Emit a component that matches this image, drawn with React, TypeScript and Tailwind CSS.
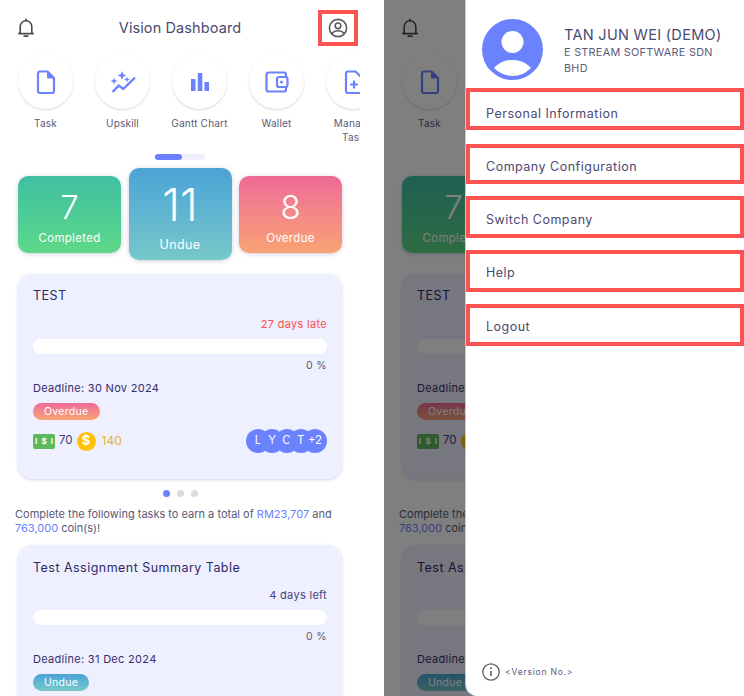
import type { ReactNode } from 'react';

const shortcuts = ['Task', 'Upskill', 'Gantt Chart', 'Wallet', 'Manage Task'];

// the highlight boxes in the picture are hand drawn, so spacing differs a little per row
const menuItems = [
  { label: 'Personal Information', box: 'h-[42px] pb-[3px]' },
  { label: 'Company Configuration', box: 'mt-[14px] h-[40px] pb-[4px]' },
  { label: 'Switch Company', box: 'mt-[12px] h-[42px] pb-[5px]' },
  { label: 'Help', box: 'mt-[12px] h-[42px] pb-[6px]' },
  { label: 'Logout', box: 'mt-[12px] h-[42px] pb-[6px]' },
];

const BellIcon = () => (
  <svg width="20" height="20" viewBox="0 0 20 20" fill="none" stroke="#4a4a4a" strokeWidth="1.6" strokeLinejoin="round">
    <path d="M4.2 14.6V8.6a5.8 5.8 0 0 1 11.6 0v6l1.4 1H2.8z" />
    <path d="M10 1.2v1.4" strokeLinecap="round" />
    <path d="M8.3 18.2h3.4" strokeWidth="1.8" strokeLinecap="round" />
  </svg>
);

const ProfileIcon = () => (
  <svg width="20" height="20" viewBox="0 0 20 20" fill="none" stroke="#5a5a5a" strokeWidth="1.6">
    <circle cx="10" cy="10" r="8.6" />
    <circle cx="10" cy="7.8" r="2.8" />
    <path d="M3.8 15.4c1.6-1.9 3.8-2.7 6.2-2.7s4.6.8 6.2 2.7" />
  </svg>
);

const ShortcutIcon = ({ name }: { name: string }) => {
  if (name === 'Task') {
    return (
      <svg width="20" height="24" viewBox="0 0 20 24" fill="none" stroke="#6b82ff" strokeWidth="2.2" strokeLinejoin="round">
        <path d="M2 3.5A2 2 0 0 1 4 1.5h7.5L18 8v13a2 2 0 0 1-2 2H4a2 2 0 0 1-2-2z" />
        <path d="M11.5 1.5V8H18z" fill="#6b82ff" strokeWidth="1" />
      </svg>
    );
  }
  if (name === 'Upskill') {
    return (
      <svg width="26" height="22" viewBox="0 0 26 22" fill="#6b82ff">
        <path d="M2.5 21l6.2-6.4 4.6 3.4L25 6.5" fill="none" stroke="#6b82ff" strokeWidth="2.4" />
        <path d="M12 0l1.2 3.3 3.3 1.2-3.3 1.2L12 9l-1.2-3.3-3.3-1.2 3.3-1.2z" />
        <path d="M4 6.5l.9 2.6 2.6.9-2.6.9-.9 2.6-.9-2.6L.5 10l2.6-.9z" />
        <path d="M17 5.5l.8 2.2 2.2.8-2.2.8-.8 2.2-.8-2.2-2.2-.8 2.2-.8z" />
      </svg>
    );
  }
  if (name === 'Gantt Chart') {
    return (
      <svg width="20" height="20" viewBox="0 0 20 20" fill="#6b82ff">
        <rect x="1" y="7" width="4.5" height="12" />
        <rect x="7.8" y="1" width="4.5" height="18" />
        <rect x="14.5" y="10" width="4.5" height="9" />
      </svg>
    );
  }
  if (name === 'Wallet') {
    return (
      <svg width="24" height="22" viewBox="0 0 24 22" fill="none" stroke="#6b82ff" strokeWidth="2.2" strokeLinejoin="round">
        <path d="M21 6V3.5a2 2 0 0 0-2-2H3.5a2 2 0 0 0-2 2v15a2 2 0 0 0 2 2H19a2 2 0 0 0 2-2V16" />
        <rect x="12" y="6" width="10.5" height="10" rx="2" />
        <circle cx="16.5" cy="11" r="1.5" fill="#6b82ff" stroke="none" />
      </svg>
    );
  }
  return (
    <svg width="20" height="24" viewBox="0 0 20 24" fill="none" stroke="#6b82ff" strokeWidth="2.2" strokeLinejoin="round">
      <path d="M2 3.5A2 2 0 0 1 4 1.5h7.5L18 8v13a2 2 0 0 1-2 2H4a2 2 0 0 1-2-2z" />
      <path d="M10 10.5v8M6 14.5h8" />
    </svg>
  );
};

const StatCard = ({ value, label, big, className }: { value: string; label: string; big?: boolean; className: string }) => (
  <div
    className={`flex w-[103px] flex-col items-center rounded-[10px] text-white shadow-[0_1px_4px_rgba(60,60,120,0.25)] ${className} ${
      big ? 'h-[92px] pt-[11px]' : 'h-[77px] pt-[11px]'
    }`}
  >
    <span className={big ? 'text-[45px] leading-[52px] font-light' : 'text-[33px] leading-[40px] font-light'}>{value}</span>
    <span className={big ? 'mt-[6px] text-[12.5px] leading-[16px] tracking-[0.4px]' : 'mt-[3px] text-[11.5px] leading-[16px] tracking-[0.3px]'}>{label}</span>
  </div>
);

const Avatars = () => (
  <div className="flex">
    {['L', 'Y', 'C', 'T', '+2'].map((a, i) => (
      <div
        key={a}
        className={`flex size-[24px] items-center justify-center rounded-full bg-[#6b82ff] text-[11.5px] text-white ${i > 0 ? 'ml-[-9.75px]' : ''}`}
      >
        {a}
      </div>
    ))}
  </div>
);

const TaskCard = ({ title, titleTop, note, noteClass, deadline, badge, badgeClass, footer }: {
  title: string;
  titleTop: string;
  note: string;
  noteClass: string;
  deadline: string;
  badge: string;
  badgeClass: string;
  footer?: ReactNode;
}) => (
  <div className="mx-[18px] h-[205px] rounded-[14px] bg-[#eeefff] px-[15px] shadow-[0_1px_3px_rgba(90,90,170,0.25)]">
    <div className={`h-[42px] text-[12.5px] leading-[16px] tracking-[0.47px] text-[#2e2a66] ${titleTop}`}>{title}</div>
    <div className={`text-right text-[11px] leading-[16px] tracking-[0.3px] ${noteClass}`}>{note}</div>
    <div className="mt-[7px] h-[15px] rounded-full bg-white" />
    <div className="mt-[5px] text-right text-[10.5px] leading-[14px] tracking-[0.4px] text-[#5a5a7a]">0 %</div>
    <div className="mt-[8px] text-[11px] leading-[14px] tracking-[0.3px] text-[#35306e]">{deadline}</div>
    <div className={`mt-[8px] flex h-[17px] w-fit items-center rounded-full px-[11px] text-[10.5px] tracking-[0.3px] text-white ${badgeClass}`}>{badge}</div>
    {footer}
  </div>
);

const Rewards = () => (
  <div className="mt-[9px] flex h-[24px] items-center">
    <div className="flex h-[15px] w-[22px] items-center justify-between rounded-[2px] bg-[#5cb85c] px-[2px] text-[8px] font-bold text-white">
      <span>I</span><span>$</span><span>I</span>
    </div>
    <span className="ml-[4px] text-[11.5px] text-[#3d3a78]">70</span>
    <div className="ml-[4px] flex size-[19px] items-center justify-center rounded-full bg-[#ffc107] text-[13px] font-bold text-white">$</div>
    <span className="ml-[6px] text-[12px] text-[#e8b423]">140</span>
    <div className="ml-auto">
      <Avatars />
    </div>
  </div>
);

const Dashboard = () => (
  <div className="h-[696px] w-[360px] overflow-hidden bg-white font-['Inter',sans-serif]">
    <header className="grid h-[54px] grid-cols-[1fr_auto_1fr] items-center pt-[2px] pr-[12px] pl-[16px]">
      <BellIcon />
      <h1 className="-ml-[4px] text-[14.5px] tracking-[0.1px] text-[#4a4a72]">Vision Dashboard</h1>
      <div className="justify-self-end">
        <ProfileIcon />
      </div>
    </header>

    <div className="flex gap-[22px] pl-[18px]">
      {shortcuts.map((s) => (
        <div key={s} className="flex w-[55px] shrink-0 flex-col items-center">
          <div className="flex size-[55px] items-center justify-center rounded-full bg-white shadow-[0_1px_2px_rgba(70,70,120,0.22)]">
            <ShortcutIcon name={s} />
          </div>
          <span className="mt-[7px] w-[60px] shrink-0 text-center text-[10px] leading-[14px] tracking-[0.2px] text-[#5a5a78]">{s}</span>
        </div>
      ))}
    </div>

    <div className="mx-auto mt-[10px] h-[6px] w-[50px] rounded-full bg-[#eeefff]">
      <div className="h-full w-[27px] rounded-full bg-[#6b7fff]" />
    </div>

    <div className="mt-[8px] flex h-[92px] items-center justify-between px-[18px]">
      <StatCard value="7" label="Completed" className="bg-gradient-to-b from-[#3fbfa3] to-[#5dd887]" />
      <StatCard value="11" label="Undue" big className="bg-gradient-to-b from-[#4ba3d6] to-[#77c8ca]" />
      <StatCard value="8" label="Overdue" className="bg-gradient-to-b from-[#ef6a97] to-[#f8a272]" />
    </div>

    <div className="mt-[14px]">
      <TaskCard
        title="TEST"
        titleTop="pt-[14px]"
        note="27 days late"
        noteClass="text-[#ff5050]"
        deadline="Deadline: 30 Nov 2024"
        badge="Overdue"
        badgeClass="bg-gradient-to-b from-[#ef6a97] to-[#f8a272]"
        footer={<Rewards />}
      />
    </div>

    <div className="mt-[11px] flex justify-center gap-[7px]">
      <span className="size-[7px] rounded-full bg-[#6b7fff]" />
      <span className="size-[7px] rounded-full bg-[#dcdcdc]" />
      <span className="size-[7px] rounded-full bg-[#dcdcdc]" />
    </div>

    <p className="mt-[10px] px-[15px] text-[11px] leading-[14px] text-[#5a5a78]">
      Complete the following tasks to earn a total of <span className="text-[#6b82ff]">RM23,707</span> and{' '}
      <span className="text-[#6b82ff]">763,000</span> coin(s)!
    </p>

    <div className="mt-[10px]">
      <TaskCard
        title="Test Assignment Summary Table"
        titleTop="pt-[15px]"
        note="4 days left"
        noteClass="text-[#45417c]"
        deadline="Deadline: 31 Dec 2024"
        badge="Undue"
        badgeClass="bg-gradient-to-b from-[#4ba3d6] to-[#77c8ca]"
      />
    </div>
  </div>
);

const Drawer = () => (
  <div className="absolute top-0 right-0 bottom-0 flex w-[278px] flex-col rounded-bl-[12px] bg-white font-['Inter',sans-serif] shadow-[-1px_0_0_#c9c9c9]">
    <div className="flex h-[88px] pt-[19px] pl-[16px]">
      <div className="size-[61px] shrink-0">
        <svg width="61" height="61" viewBox="0 0 61 61">
          <circle cx="30.5" cy="30.5" r="30.5" fill="#6b82ff" />
          <circle cx="30.5" cy="23" r="11" fill="#fff" />
          <path d="M12 49c5-5.5 11.5-8 18.5-8S44 43.5 49 49c-5 5-11.5 8-18.5 8S17 54 12 49z" fill="#fff" />
        </svg>
      </div>
      <div className="ml-[21px] w-[170px]">
        <div className="mt-[7px] text-[14.5px] leading-[18px] tracking-[0.3px] whitespace-nowrap text-[#4a4a72]">TAN JUN WEI (DEMO)</div>
        <div className="mt-[1px] text-[10.8px] leading-[15.5px] tracking-[0.3px] text-[#5a5a78]">E STREAM SOFTWARE SDN BHD</div>
      </div>
    </div>
    <div className="flex flex-col">
      {menuItems.map((m) => (
        <div key={m.label} className={`flex items-end border-4 border-[#fb5252] pl-[16px] text-[12.5px] leading-[18px] tracking-[0.5px] text-[#4a4a72] ${m.box}`}>
          {m.label}
        </div>
      ))}
    </div>
    <div className="mt-auto mb-[15px] flex items-center pl-[16px]">
      <svg width="18" height="18" viewBox="0 0 18 18" fill="none" stroke="#5f5f5f" strokeWidth="1.3">
        <circle cx="9" cy="9" r="8.2" />
        <path d="M9 8v5" strokeWidth="1.6" />
        <circle cx="9" cy="5.3" r="1" fill="#5f5f5f" stroke="none" />
      </svg>
      <span className="ml-[5px] text-[8.5px] tracking-[0.8px] text-[#5a5a78]">{'<Version No.>'}</span>
    </div>
  </div>
);

export default function App() {
  return (
    <div className="flex h-[696px] w-[744px] gap-[24px] overflow-hidden bg-white">
      <div className="relative">
        <Dashboard />
        {/* highlight round the profile button */}
        <div className="absolute top-[10px] left-[318px] h-[36px] w-[40px] border-[4px] border-[#fb5252]" />
      </div>
      <div className="relative">
        <Dashboard />
        <div className="absolute inset-0 bg-black/50" />
        <Drawer />
      </div>
    </div>
  );
}
